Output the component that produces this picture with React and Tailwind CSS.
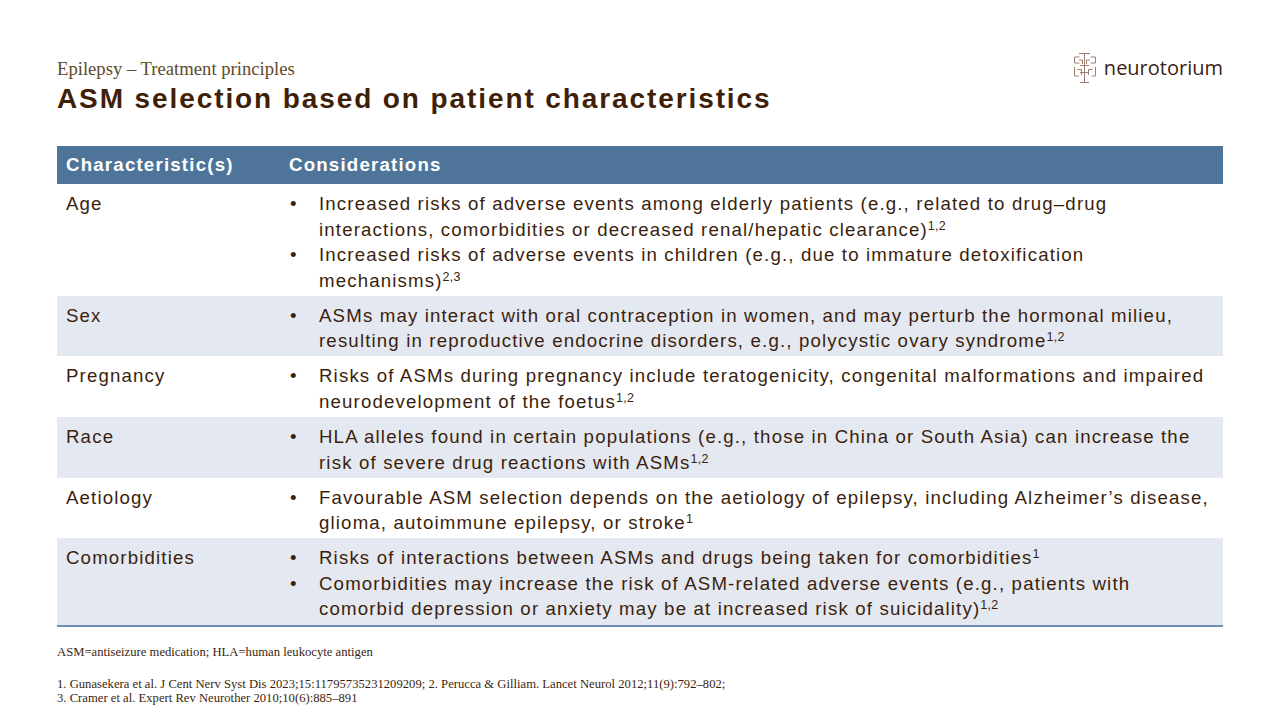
import React from "react";

const rows = [
  {
    label: "Age",
    bg: "bg-white",
    items: [
      ["Increased risks of adverse events among elderly patients (e.g., related to drug–drug interactions, comorbidities or decreased renal/hepatic clearance)", "1,2"],
      ["Increased risks of adverse events in children (e.g., due to immature detoxification mechanisms)", "2,3"],
    ],
  },
  {
    label: "Sex",
    bg: "bg-[#e4e8f0]",
    items: [
      ["ASMs may interact with oral contraception in women, and may perturb the hormonal milieu, resulting in reproductive endocrine disorders, e.g., polycystic ovary syndrome", "1,2"],
    ],
  },
  {
    label: "Pregnancy",
    bg: "bg-white",
    items: [
      ["Risks of ASMs during pregnancy include teratogenicity, congenital malformations and impaired neurodevelopment of the foetus", "1,2"],
    ],
  },
  {
    label: "Race",
    bg: "bg-[#e4e8f0]",
    items: [
      ["HLA alleles found in certain populations (e.g., those in China or South Asia) can increase the risk of severe drug reactions with ASMs", "1,2"],
    ],
  },
  {
    label: "Aetiology",
    bg: "bg-white",
    items: [
      ["Favourable ASM selection depends on the aetiology of epilepsy, including Alzheimer’s disease, glioma, autoimmune epilepsy, or stroke", "1"],
    ],
  },
  {
    label: "Comorbidities",
    bg: "bg-[#e4e8f0]",
    items: [
      ["Risks of interactions between ASMs and drugs being taken for comorbidities", "1"],
      ["Comorbidities may increase the risk of ASM-related adverse events (e.g., patients with comorbid depression or anxiety may be at increased risk of suicidality)", "1,2"],
    ],
  },
];

const Logo = () => (
  <div className="flex items-center gap-[6px]">
    <svg width="26" height="33" viewBox="0 0 26 33" fill="none" stroke="#9c8070" strokeWidth="1">
      <path d="M7 2.5h11M12.5 2.5v29M8 31.5h9" />
      <path d="M2.5 6v6h5M2.5 6h5M23.5 6v6h-5M23.5 6h-5" />
      <path d="M7 9h3.5v4M18 9h-3.5v4" />
      <path d="M2.5 16v9h4M23.5 16v9h-4M5.5 18.5h4v5.5M20.5 18.5h-4v5.5" />
      <path d="M8 14.5h9M8 21.5h9" />
    </svg>
    <span className="font-['Open_Sans',sans-serif] text-[20px] leading-none text-[#3d2314]">
      neurotorium
    </span>
  </div>
);

const App = () => {
  return (
    <div className="w-[1280px] h-[720px] bg-white relative overflow-hidden font-['Liberation_Sans',Arial,sans-serif]">
      <div className="px-[57px] pt-[58px]">
        <div className="flex justify-between items-start">
          <div>
            <p className="font-['Liberation_Serif',serif] text-[18.67px] leading-[22px] text-[#5e4b2c]">
              Epilepsy – Treatment principles
            </p>
            <h1 className="text-[28px] leading-[34px] font-bold text-[#401f08] mt-[2px] tracking-[1.9px]">
              ASM selection based on patient characteristics
            </h1>
          </div>
          <div className="-mt-[7px]">
            <Logo />
          </div>
        </div>

        <div className="mt-[30px] border-b-2 border-[#6f8fb0]">
          <div className="grid grid-cols-[223px_1fr] bg-[#4e7499] text-white font-bold text-[18.67px] tracking-[1.2px] h-[38px] items-center">
            <div className="pl-[9px]">Characteristic(s)</div>
            <div className="pl-[9px]">Considerations</div>
          </div>
          {rows.map((row) => (
            <div key={row.label} className={`grid grid-cols-[223px_1fr] ${row.bg} text-[18.67px] leading-[25.5px] tracking-[1.15px] text-[#3b1f0e] pt-[7px] pb-[2.7px]`}>
              <div className="pl-[9px]">{row.label}</div>
              <ul className="pr-[2px]">
                {row.items.map((it, i) => (
                  <li key={i} className="flex">
                    <span className="w-[39px] shrink-0 pl-[10px]">•</span>
                    <span>
                      {it[0]}
                      <sup className="text-[12.5px] tracking-[0.3px] align-baseline relative -top-[6px] leading-none">{it[1]}</sup>
                    </span>
                  </li>
                ))}
              </ul>
            </div>
          ))}
        </div>

        <div className="font-['Liberation_Serif',serif] text-[12.67px] text-[#3b1f0e] mt-[18px] leading-[14px]">
          <p>ASM=antiseizure medication; HLA=human leukocyte antigen</p>
          <p className="mt-[18px]">1. Gunasekera et al. J Cent Nerv Syst Dis 2023;15:11795735231209209; 2. Perucca &amp; Gilliam. Lancet Neurol 2012;11(9):792–802;</p>
          <p>3. Cramer et al. Expert Rev Neurother 2010;10(6):885–891</p>
        </div>
      </div>
    </div>
  );
};

export default App;
